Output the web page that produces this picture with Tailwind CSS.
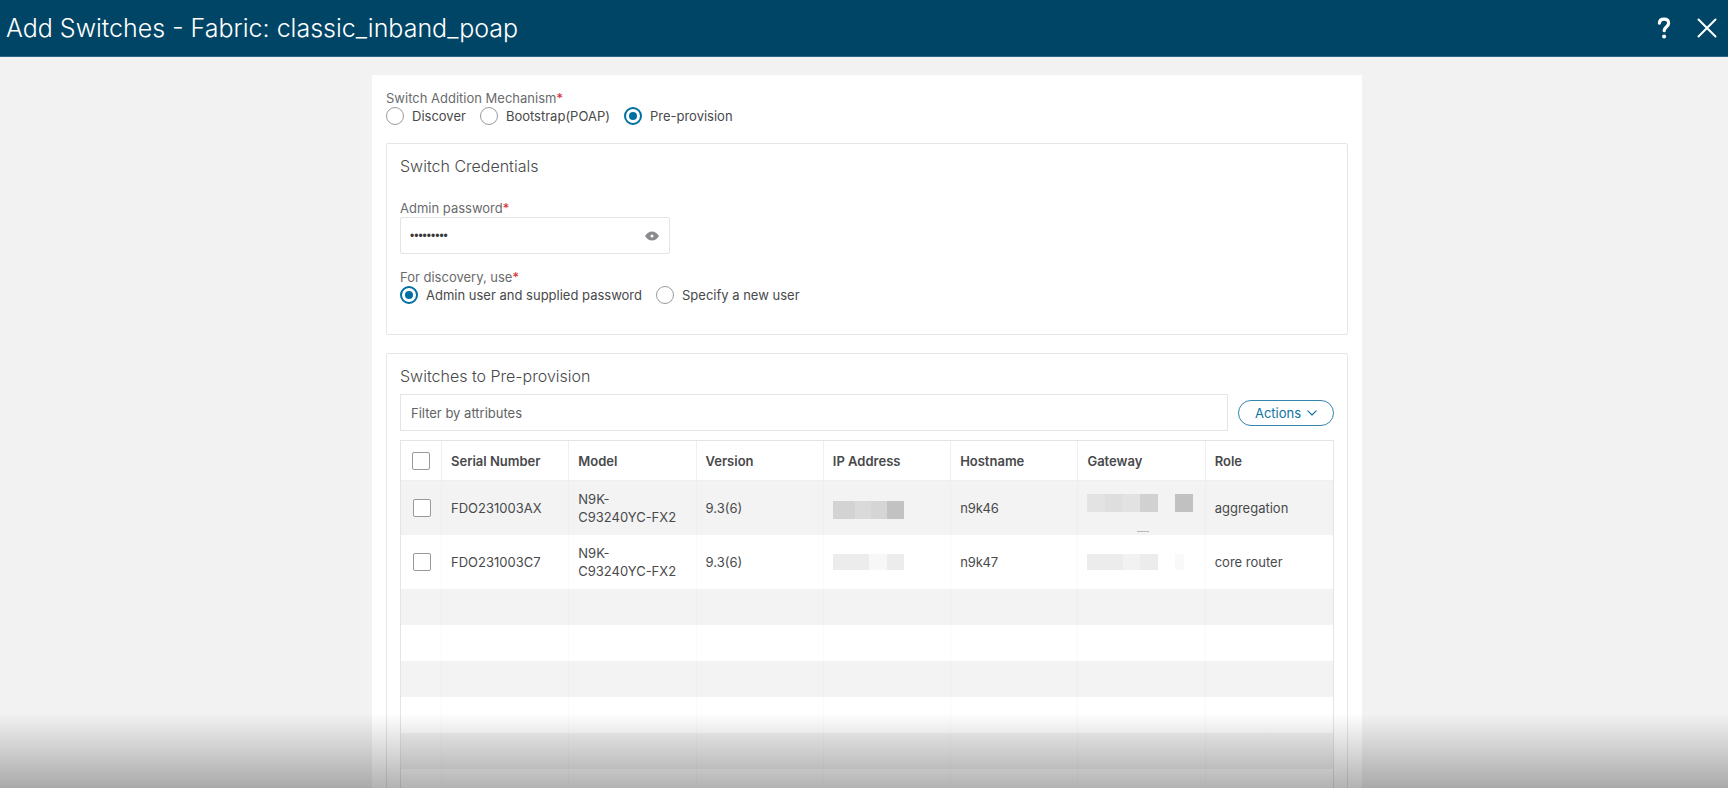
<!DOCTYPE html>
<html lang="en">
<head>
<meta charset="utf-8">
<meta name="viewport" content="width=device-width, initial-scale=1">
<title>Add Switches</title>
<script src="https://cdn.jsdelivr.net/npm/@tailwindcss/browser@4"></script>
</head>
<body class="relative flex h-screen flex-col overflow-hidden bg-[#f2f2f3] font-['Inter','Liberation_Sans',sans-serif] text-[13px] leading-[18px] text-[#48494b]">
  <header class="flex h-[57px] shrink-0 items-center justify-between border-b border-[#2f6587] bg-[#004566] pr-[10px] pl-[6px] text-white">
    <h1 class="text-[25px] leading-8 font-light">Add Switches - Fabric: classic_inband_poap</h1>
    <div class="flex items-center gap-[24px]">
      <button type="button" aria-label="Help">
        <svg class="block h-6 w-4" viewBox="0 0 16 24" fill="none" stroke="currentColor" stroke-width="3.2" stroke-linecap="round" stroke-linejoin="round"><path d="M3.400 7.200C3.600 4.400 5.500 3.200 8 3.200c2.700 0 4.600 1.500 4.600 4 0 3.400-4.300 3.600-4.400 7.400"/><circle cx="8.1" cy="20.6" r="2" fill="currentColor" stroke="none"/></svg>
      </button>
      <button type="button" aria-label="Close">
        <svg class="block size-[22px]" viewBox="0 0 22 22" fill="none" stroke="currentColor" stroke-width="2" stroke-linecap="round"><path d="M2.500 2.500l17 17M19.500 2.500l-17 17"/></svg>
      </button>
    </div>
  </header>

  <main class="flex min-h-0 flex-1 justify-center overflow-hidden pt-[18px] pl-[6px]">
    <form class="h-max w-full max-w-[990px] bg-white px-[14px] pt-[14px] pb-10">
      <fieldset>
        <legend class="text-[#6a6b6d]">Switch Addition Mechanism<span class="text-[#d8282f]">*</span></legend>
        <div class="flex gap-[14px]">
          <label class="flex items-center gap-[8px]"><input type="radio" name="mechanism" class="size-[18px] appearance-none rounded-full border border-[#9a9b9d] bg-white checked:border-2 checked:border-[#0070a2] checked:bg-[#0070a2] checked:bg-clip-content checked:p-[3px]">Discover</label>
          <label class="flex items-center gap-[8px]"><input type="radio" name="mechanism" class="size-[18px] appearance-none rounded-full border border-[#9a9b9d] bg-white checked:border-2 checked:border-[#0070a2] checked:bg-[#0070a2] checked:bg-clip-content checked:p-[3px]">Bootstrap(POAP)</label>
          <label class="flex items-center gap-[8px]"><input type="radio" name="mechanism" checked class="size-[18px] appearance-none rounded-full border border-[#9a9b9d] bg-white checked:border-2 checked:border-[#0070a2] checked:bg-[#0070a2] checked:bg-clip-content checked:p-[3px]">Pre-provision</label>
        </div>
      </fieldset>

      <section class="mt-[18px] rounded-xs border border-[#e6e6e7] px-[13px] pt-[10px] pb-[30px]">
        <h2 class="text-[16px] leading-6 font-light">Switch Credentials</h2>
        <label for="password" class="mt-[21px] block text-[#6a6b6d]">Admin password<span class="text-[#d8282f]">*</span></label>
        <div class="flex h-[37px] w-[270px] items-center rounded-xs border border-[#e4e4e5] bg-white pr-[10px] pl-[9px]">
          <input id="password" type="password" value="password1" class="min-w-0 flex-1 bg-transparent font-['Liberation_Sans',sans-serif] text-[12px] text-[#39393b] outline-none">
          <button type="button" aria-label="Show password" class="text-[#8a8b8d]">
            <svg class="block h-[10px] w-[14px]" viewBox="0 0 14 10" fill="currentColor" fill-rule="evenodd"><path d="M0 5C2 2 4.300 .4 7 .4S12 2 14 5C12 8 9.700 9.600 7 9.600S2 8 0 5ZM7 3.500a1.500 1.500 0 1 0 0 3a1.500 1.500 0 1 0 0-3Z"/></svg>
          </button>
        </div>
        <fieldset class="mt-[14px]">
          <legend class="text-[#6a6b6d]">For discovery, use<span class="text-[#d8282f]">*</span></legend>
          <div class="flex gap-[14px]">
            <label class="flex items-center gap-[8px]"><input type="radio" name="discovery" checked class="size-[18px] appearance-none rounded-full border border-[#9a9b9d] bg-white checked:border-2 checked:border-[#0070a2] checked:bg-[#0070a2] checked:bg-clip-content checked:p-[3px]">Admin user and supplied password</label>
            <label class="flex items-center gap-[8px]"><input type="radio" name="discovery" class="size-[18px] appearance-none rounded-full border border-[#9a9b9d] bg-white checked:border-2 checked:border-[#0070a2] checked:bg-[#0070a2] checked:bg-clip-content checked:p-[3px]">Specify a new user</label>
          </div>
        </fieldset>
      </section>

      <section class="mt-[18px] rounded-xs border border-[#e6e6e7] px-[13px] pt-[10px] pb-4">
        <h2 class="text-[16px] leading-6 font-light">Switches to Pre-provision</h2>
        <div class="mt-[6px] flex items-center gap-[10px]">
          <input type="text" aria-label="Filter by attributes" placeholder="Filter by attributes" class="h-[37px] min-w-0 flex-1 border border-[#e4e4e5] bg-white px-[10px] outline-none placeholder:text-[#626365]">
          <button type="button" class="flex h-[26px] w-[96px] items-center justify-center gap-[6px] rounded-full border border-[#3585ad] text-[#0d74a2]">Actions
            <svg class="block h-[6px] w-[10px]" viewBox="0 0 10 6" fill="none" stroke="currentColor" stroke-width="1.100" stroke-linecap="round" stroke-linejoin="round"><path d="M.8.8L5 5L9.200.8"/></svg>
          </button>
        </div>

        <table class="mt-[9px] w-full table-fixed border-separate border-spacing-0 border border-[#e4e4e5] text-left [&_td]:border-r [&_td]:border-black/2 [&_th]:border-r [&_th]:border-b [&_th]:border-[#efeff0] [&_tr>*:last-child]:border-r-0">
          <thead>
            <tr class="h-[40px] [&>th]:px-[9px] [&>th]:font-semibold">
              <th class="w-[41px]"><input type="checkbox" aria-label="Select all switches" class="ml-[2px] block size-[18px] appearance-none rounded-xs border border-[#98999b] bg-white"></th>
              <th>Serial Number</th><th>Model</th><th>Version</th><th>IP Address</th><th>Hostname</th><th>Gateway</th><th>Role</th>
            </tr>
          </thead>
          <tbody class="[&>tr:nth-child(odd)]:bg-[#f3f3f3]">
            <tr class="h-[54px] [&>td]:px-[9px]">
              <td><input type="checkbox" aria-label="Select FDO231003AX" class="ml-[3px] block size-[18px] appearance-none rounded-xs border border-[#98999b] bg-white"></td>
              <td>FDO231003AX</td><td>N9K-<br>C93240YC-FX2</td><td>9.3(6)</td>
              <td><div class="mt-[4px] flex h-[18px] [&>i]:shrink-0" aria-label="Hidden address"><i class="w-[22px] bg-[#d3d3d4]"></i><i class="w-[16px] bg-[#dadadb]"></i><i class="w-[16px] bg-[#d5d5d6]"></i><i class="w-[17px] bg-[#c2c2c3]"></i></div></td>
              <td>n9k46</td>
              <td class="align-top"><div class="mt-[13px] flex h-[18px] [&>i]:shrink-0" aria-label="Hidden gateway"><i class="w-[18px] bg-[#e3e3e4]"></i><i class="w-[17px] bg-[#dedede]"></i><i class="w-[18px] bg-[#e2e2e3]"></i><i class="w-[18px] bg-[#d1d1d2]"></i><i class="w-[17px]"></i><i class="w-[18px] bg-[#c1c1c2]"></i></div><div class="mt-[19px] ml-[50px] h-px w-[12px] bg-[#b9b9ba]"></div></td>
              <td>aggregation</td>
            </tr>
            <tr class="h-[54px] [&>td]:px-[9px]">
              <td><input type="checkbox" aria-label="Select FDO231003C7" class="ml-[3px] block size-[18px] appearance-none rounded-xs border border-[#98999b] bg-white"></td>
              <td>FDO231003C7</td><td>N9K-<br>C93240YC-FX2</td><td>9.3(6)</td>
              <td><div class="flex h-[16px] [&>i]:shrink-0" aria-label="Hidden address"><i class="w-[36px] bg-[#ececed]"></i><i class="w-[18px] bg-[#f7f7f7]"></i><i class="w-[17px] bg-[#ececed]"></i></div></td>
              <td>n9k47</td>
              <td><div class="flex h-[16px] [&>i]:shrink-0" aria-label="Hidden gateway"><i class="w-[36px] bg-[#ececed]"></i><i class="w-[17px] bg-[#f2f2f2]"></i><i class="w-[18px] bg-[#ececed]"></i><i class="w-[17px]"></i><i class="w-[9px] bg-[#f9f9f9]"></i></div></td>
              <td>core router</td>
            </tr>
            <tr class="h-[36px]"><td></td><td></td><td></td><td></td><td></td><td></td><td></td><td></td></tr>
            <tr class="h-[36px]"><td></td><td></td><td></td><td></td><td></td><td></td><td></td><td></td></tr>
            <tr class="h-[36px]"><td></td><td></td><td></td><td></td><td></td><td></td><td></td><td></td></tr>
            <tr class="h-[36px]"><td></td><td></td><td></td><td></td><td></td><td></td><td></td><td></td></tr>
            <tr class="h-[36px]"><td></td><td></td><td></td><td></td><td></td><td></td><td></td><td></td></tr>
            <tr class="h-[36px]"><td></td><td></td><td></td><td></td><td></td><td></td><td></td><td></td></tr>
          </tbody>
        </table>
      </section>
    </form>
  </main>
  <div class="pointer-events-none absolute inset-x-0 bottom-0 h-[75px] bg-linear-to-b from-black/0 to-black/30"></div>
</body>
</html>
